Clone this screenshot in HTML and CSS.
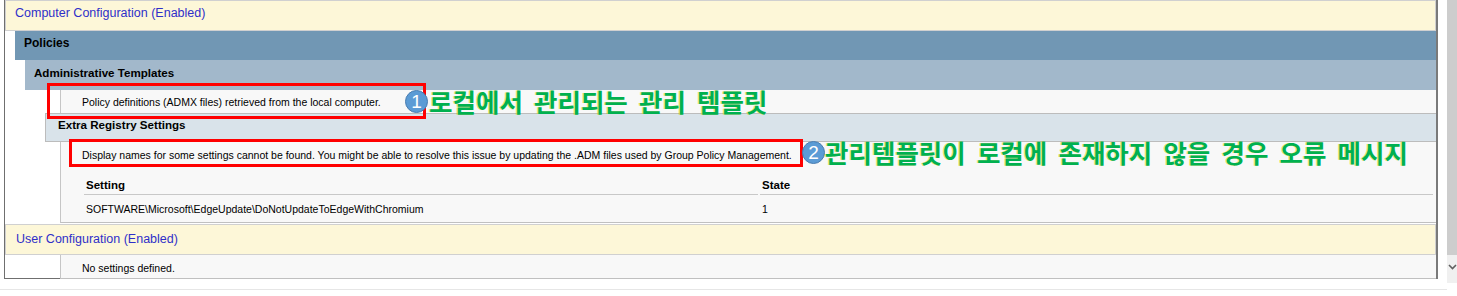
FILE: index.html
```html
<!DOCTYPE html>
<html lang="ko">
<head>
    <meta charset="UTF-8">
    <title>Group Policy Report</title>
    <link rel="stylesheet" href="styles.css">
</head>
<body>
    <div class="page">
        <div class="viewer">
            <div class="report">
                <div class="config config-computer">Computer Configuration (Enabled)</div>
                <div class="category cat-policies">Policies</div>
                <div class="category cat-admin">Administrative Templates</div>
                <div class="note note-admin">Policy definitions (ADMX files) retrieved from the local computer.</div>
                <div class="category cat-extra">Extra Registry Settings</div>
                <div class="detail">
                    <div class="detail-msg">Display names for some settings cannot be found. You might be able to resolve this issue by updating the .ADM files used by Group Policy Management.</div>
                    <div class="settings-table">
                        <div class="th">Setting</div>
                        <div class="th">State</div>
                        <div class="td">SOFTWARE\Microsoft\EdgeUpdate\DoNotUpdateToEdgeWithChromium</div>
                        <div class="td">1</div>
                    </div>
                </div>
                <div class="config config-user">User Configuration (Enabled)</div>
                <div class="last-row">
                    <div class="spacer"></div>
                    <div class="note note-last">No settings defined.</div>
                </div>
            </div>
            <div class="hscroll"></div>
        </div>
        <div class="vscroll">
            <div class="vscroll-thumb"></div>
            <div class="vscroll-btn">
                <svg width="9" height="6" viewBox="0 0 9 6"><polyline points="1,1 4.5,4.5 8,1" fill="none" stroke="#606060" stroke-width="1.6"/></svg>
            </div>
        </div>

        <!-- annotations drawn over the report -->
        <div class="mark mark-1"></div>
        <div class="badge badge-1">1</div>
        <div class="callout callout-1">로컬에서 관리되는 관리 템플릿</div>

        <div class="mark mark-2"></div>
        <div class="badge badge-2">2</div>
        <div class="callout callout-2">관리템플릿이 로컬에 존재하지 않을 경우 오류 메시지</div>
    </div>
</body>
</html>
```

FILE: styles.css
```css
* {
    margin: 0;
    padding: 0;
    box-sizing: border-box;
}

body {
    font-family: "Liberation Sans", Arial, sans-serif;
    background: #ffffff;
    color: #000;
}

.page {
    position: relative;
    display: flex;
    width: 1457px;
    height: 296px;
    overflow: hidden;
}

.viewer {
    flex: none;
    width: 1447px;
}

.report {
    margin-left: 4px;
    width: 1434px;
    border-left: 1px solid #6f6f6f;
    border-right: 2px solid #7a7a7a;
}

.config {
    display: flex;
    align-items: center;
    height: 31px;
    padding-left: 9px;
    background: #fdf7d8;
    border: 1px solid #d0d0d0;
    color: #2f2fc9;
    font-size: 12.5px;
}

.config-computer {
    padding-bottom: 6px;
}

.config-user {
    margin-top: 1px;
    padding-left: 10px;
    padding-bottom: 2px;
}

.category {
    display: flex;
    align-items: center;
    font-weight: bold;
    font-size: 11.6px;
    padding-left: 9px;
    padding-bottom: 6px;
}

.cat-policies {
    margin-left: 10px;
    height: 29px;
    background: #7197b4;
    font-size: 12px;
}

.cat-admin {
    margin-left: 20px;
    height: 30px;
    background: #a2b8cb;
}

.cat-extra {
    margin-left: 40px;
    height: 29px;
    padding-left: 12px;
    background: #d9e3ea;
    border: 1px solid #bcbcbc;
    border-right: none;
}

.note {
    display: flex;
    align-items: center;
    padding-left: 21px;
    background: #f8f8f8;
    border-left: 1px solid #c6c6c6;
    font-size: 10.5px;
}

.note-admin {
    margin-left: 55px;
    height: 23px;
}

.detail {
    margin-left: 55px;
    height: 81px;
    background: #f8f8f8;
    border-left: 1px solid #c6c6c6;
    border-bottom: 1px solid #c0c0c0;
    font-size: 10.5px;
}

.detail-msg {
    display: flex;
    align-items: center;
    height: 25px;
    padding-left: 21px;
}

.settings-table {
    display: grid;
    grid-template-columns: 674px 1fr;
    column-gap: 2px;
    margin: 0 3px 0 23px;
}

.th {
    display: flex;
    align-items: flex-end;
    height: 28px;
    padding: 0 0 3px 2px;
    font-weight: bold;
    font-size: 11.5px;
    border-bottom: 1px solid #c8c8c8;
}

.td {
    display: flex;
    align-items: center;
    height: 27px;
    padding-left: 2px;
}

.last-row {
    display: flex;
    height: 24px;
}

.spacer {
    width: 55px;
    border-bottom: 1px solid #6f6f6f;
}

.note-last {
    flex: 1;
    padding-top: 2px;
    border-bottom: 1px solid #c0c0c0;
}

.hscroll {
    margin-top: 10px;
    border-top: 1px solid #e6e6e6;
}

.vscroll {
    flex: none;
    width: 10px;
    display: flex;
    flex-direction: column;
}

.vscroll-thumb {
    height: 255px;
    background: #cdcdcd;
}

.vscroll-btn {
    height: 28px;
    background: #f0f0f0;
    padding: 9px 0 0 1px;
}

.vscroll-btn svg {
    display: block;
}

/* annotation layer */
.mark {
    position: absolute;
    border: 3px solid #ff0000;
}

.mark-1 {
    left: 47px;
    top: 83px;
    width: 379px;
    height: 36px;
}

.mark-2 {
    left: 69px;
    top: 139px;
    width: 734px;
    height: 28px;
}

.badge {
    position: absolute;
    width: 23px;
    height: 23px;
    border-radius: 50%;
    background: #5b9bd5;
    border: 1px solid #4a7db0;
    color: #fff;
    font-size: 19px;
    line-height: 21px;
    text-align: center;
}

.badge-1 {
    left: 405px;
    top: 90px;
}

.badge-2 {
    left: 802px;
    top: 141px;
}

.callout {
    position: absolute;
    font-family: "Noto Sans CJK KR", sans-serif;
    font-weight: bold;
    font-size: 25.5px;
    line-height: 26px;
    word-spacing: 4px;
    color: #00b050;
    white-space: nowrap;
    text-shadow: -1px 0 0 rgba(230, 220, 0, 0.55);
}

.callout-1 {
    left: 429px;
    top: 88px;
}

.callout-2 {
    left: 825px;
    top: 139px;
}
```
